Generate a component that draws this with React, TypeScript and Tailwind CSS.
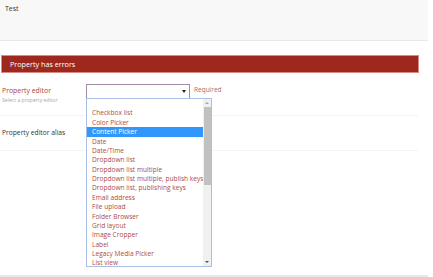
const items = [
  '',
  'Checkbox list',
  'Color Picker',
  'Content Picker',
  'Date',
  'Date/Time',
  'Dropdown list',
  'Dropdown list multiple',
  'Dropdown list multiple, publish keys',
  'Dropdown list, publishing keys',
  'Email address',
  'File upload',
  'Folder Browser',
  'Grid layout',
  'Image Cropper',
  'Label',
  'Legacy Media Picker',
  'List view',
]

function Dropdown() {
  return (
    <div className="absolute left-[86px] top-[98px] flex h-[169px] w-[126px] border border-[#a9c0e4] bg-white">
      <div className="flex-1 overflow-hidden">
        {items.map((it, i) => (
          <div
            key={i}
            className={`h-[9.375px] whitespace-nowrap pl-[5px] text-[6.6px] leading-[9.375px] ${
              it === 'Content Picker' ? 'bg-[#3297fd] text-white' : 'text-[#ad4b45]'
            }`}
          >
            {it}
          </div>
        ))}
      </div>
      <div className="flex w-[8px] flex-col bg-[#f0f0f0]">
        <div className="flex h-[8px] items-center justify-center">
          <div className="h-0 w-0 border-x-[2px] border-b-[2px] border-x-transparent border-b-[#a3a3a3]" />
        </div>
        <div className="mx-[0.5px] h-[78px] bg-[#c1c1c1]" />
        <div className="flex-1" />
        <div className="flex h-[8px] items-center justify-center">
          <div className="h-0 w-0 border-x-[2px] border-t-[2px] border-x-transparent border-t-[#505050]" />
        </div>
      </div>
    </div>
  )
}

export default function App() {
  return (
    <div className="relative h-[277px] w-[433px] overflow-hidden bg-white font-['Open_Sans',sans-serif] text-[#333]">
      <div className="h-[41px] w-[428px] border-b border-[#e8e8e8] bg-[#f8f8f8] px-[5px] pt-[4px] text-[7px]">
        Test
      </div>
      <div className="ml-[1px] mt-[14px] flex h-[18px] w-[418px] items-center border border-[#d88a84] bg-[#9e281e] px-[8px] text-[7.2px] text-white">
        Property has errors
      </div>
      <div className="flex h-[43px] w-[418px] border-b border-[#f3f3f3] pt-[11px]">
        <div className="w-[86px] pl-[2px]">
          <div className="pt-[1px] text-[6.9px] leading-[11px] text-[#a9453f]">Property editor</div>
          <div className="text-[5.1px] leading-[9px] text-[#a8a8a8]">Select a property editor</div>
        </div>
        <div className="flex h-[15px] w-[104px] items-center justify-end border border-[#a18aa6] bg-white pr-[3px]">
          <div className="h-0 w-0 border-x-[2px] border-t-[3px] border-x-transparent border-t-[#222]" />
        </div>
        <div className="pl-[4px] pt-[1px] text-[6.5px] leading-[10px] text-[#b06a64]">Required</div>
      </div>
      <div className="flex h-[35px] w-[418px] items-center border-b border-[#f3f3f3] pl-[2px] text-[6.7px] text-[#333]">
        Property editor alias
      </div>
      <div className="absolute left-0 top-[275px] h-[2px] w-[428px] bg-[#e8e8e8]" />
      <Dropdown />
    </div>
  )
}
